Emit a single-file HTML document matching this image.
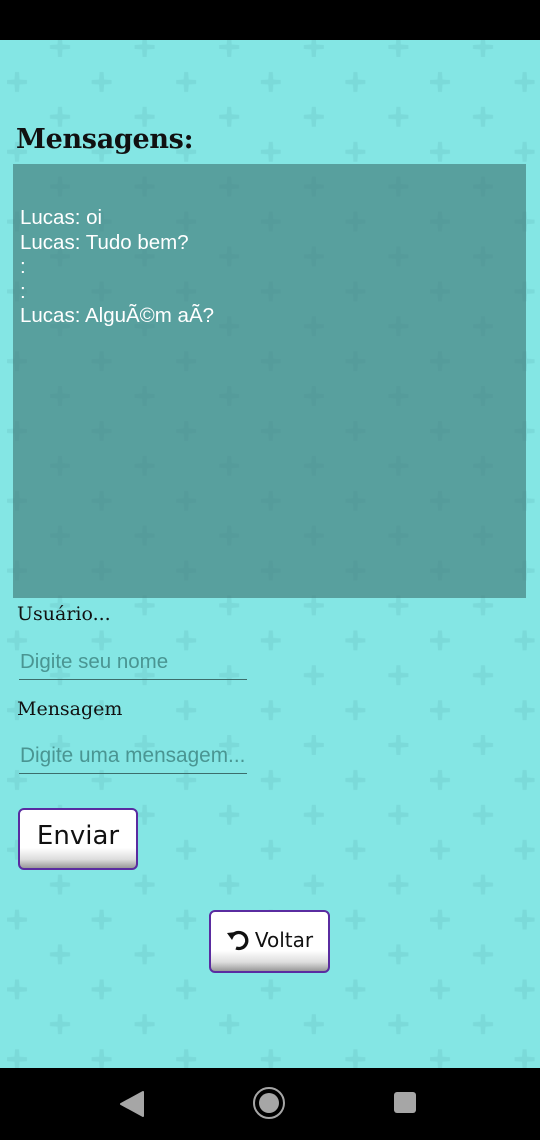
<!DOCTYPE html>
<html><head><meta charset="utf-8"><style>
*{margin:0;padding:0;box-sizing:border-box}
body{width:540px;height:1140px;overflow:hidden;background:#000;position:relative;font-family:"Liberation Sans",sans-serif}
#app{position:absolute;left:0;top:40px;width:540px;height:1028px;background:#84e6e4;overflow:hidden}
#bg{position:absolute;left:0;top:0}
.abs{position:absolute}
h1{position:absolute;left:16px;top:84px;font-family:"DejaVu Serif","Liberation Serif",serif;font-weight:bold;font-size:27px;color:#111;letter-spacing:-0.3px}
#panel{position:absolute;left:13px;top:124px;width:513px;height:434px;background:rgba(70,130,128,0.7)}
#msgs{position:absolute;left:20px;top:166px;color:#fff;font-size:20.5px;line-height:24.5px}
.lbl{position:absolute;left:17px;font-family:"DejaVu Serif","Liberation Serif",serif;font-size:19px;color:#111}
.inp{position:absolute;left:19px;width:228px;border-bottom:1.3px solid #3c6e6c;color:#4a9592;font-size:20.5px;padding-left:1px;white-space:nowrap}
.btn{position:absolute;border:2px solid #5a2ca0;border-radius:6px;background:linear-gradient(#fff 0%,#fff 65%,#ddd 85%,#999 100%);color:#111;display:flex;align-items:center;justify-content:center;font-family:"DejaVu Sans","Liberation Sans",sans-serif}
</style></head><body>
<div id="app">
<svg id="bg" width="540" height="1028">
<defs>
<g id="c"><path d="M-2,-10 L2,-10 L2.5,-2.5 L10,-2 L10,2 L2.5,2.5 L2,10 L-2,10 L-2.5,2.5 L-10,2 L-10,-2 L-2.5,-2.5 Z" fill="#7bdad9"/></g>
<pattern id="p" patternUnits="userSpaceOnUse" x="0" y="0" width="84.6" height="69.8">
<use href="#c" x="60" y="7"/>
<use href="#c" x="17" y="42"/>
<use href="#c" x="101.6" y="42"/>
<use href="#c" x="17" y="-27.8"/>
<use href="#c" x="60" y="76.8"/>
</pattern>
</defs>
<rect width="540" height="1028" fill="url(#p)"/>
</svg>
<h1>Mensagens:</h1>
<div id="panel"></div>
<div id="msgs">Lucas: oi<br>Lucas: Tudo bem?<br>:<br>:<br>Lucas: AlguÃ©m aÃ?</div>
<div class="lbl" style="top:563px">Usuário...</div>
<div class="inp" style="top:610px;height:30px">Digite seu nome</div>
<div class="lbl" style="top:658px">Mensagem</div>
<div class="inp" style="top:704px;height:30px;font-size:20.8px">Digite uma mensagem...</div>
<div class="btn" style="left:18px;top:768px;width:120px;height:62px;font-size:26px;padding-bottom:6px">Enviar</div>
<div class="btn" style="left:209px;top:870px;width:121px;height:63px;font-size:20px;padding-bottom:4px">
<svg width="26" height="24" viewBox="0 0 26 24" style="margin-right:3px"><path d="M7,7 A8,8 0 1 1 10,20" fill="none" stroke="#111" stroke-width="3.3"/><path d="M1,5 L10,4 L6,12 Z" fill="#111"/></svg>Voltar</div>
</div>
<svg class="abs" style="left:0;top:1068px" width="540" height="72">
<path d="M121,36 L143,24 L143,48 Z" fill="#a6a6a6" stroke="#a6a6a6" stroke-width="2" stroke-linejoin="round"/>
<circle cx="269" cy="35" r="15" fill="none" stroke="#a6a6a6" stroke-width="2"/>
<circle cx="269" cy="35" r="10" fill="#a6a6a6"/>
<rect x="394" y="24" width="22" height="21" rx="3" fill="#a6a6a6"/>
</svg>
</body></html>
